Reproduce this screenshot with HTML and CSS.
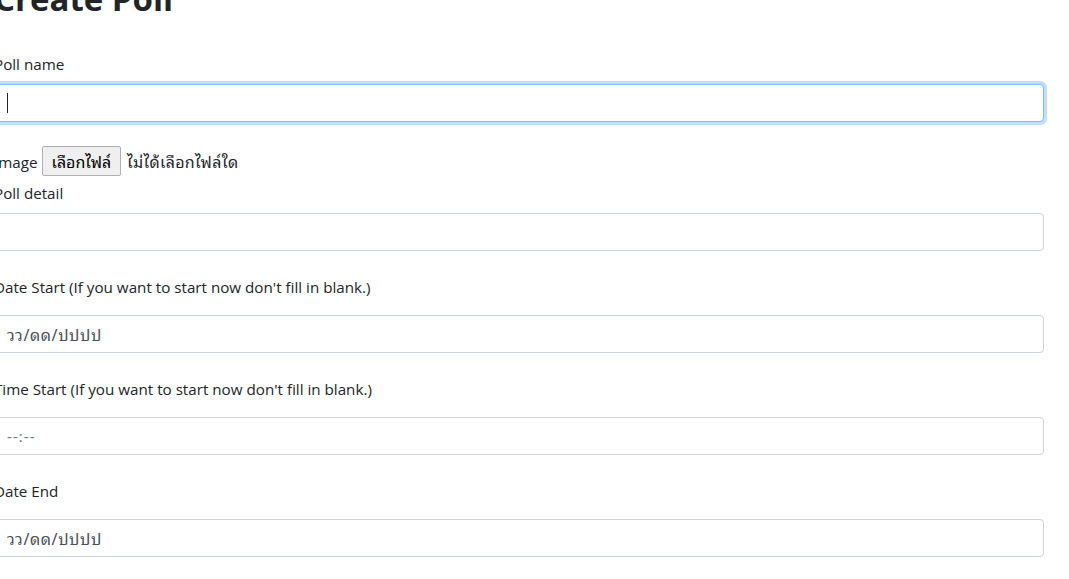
FILE: index.html
```html
<!DOCTYPE html>
<html lang="th">
<head>
<meta charset="utf-8">
<title>Create Poll</title>
<link rel="stylesheet" href="styles.css">
</head>
<body>
<div class="page">
  <h1 class="title">Create Poll</h1>
  <form class="form">
    <div class="group">
      <label class="label" for="pollName">Poll name</label>
      <div class="field-wrap">
        <input id="pollName" class="control control-focus" type="text">
        <span class="caret"></span>
      </div>
    </div>
    <div class="file-row">
      <span class="file-label">Image</span>
      <button type="button" class="file-btn th">เลือกไฟล์</button>
      <span class="file-status th">ไม่ได้เลือกไฟล์ใด</span>
    </div>
    <div class="group">
      <label class="label" for="pollDetail">Poll detail</label>
      <input id="pollDetail" class="control" type="text">
    </div>
    <div class="group">
      <label class="label label-spaced" for="dateStart">Date Start (If you want to start now don't fill in blank.)</label>
      <input id="dateStart" class="control control-date th" type="text" value="วว/ดด/ปปปป">
    </div>
    <div class="group">
      <label class="label label-spaced" for="timeStart">Time Start (If you want to start now don't fill in blank.)</label>
      <input id="timeStart" class="control control-time" type="text" value="--:--">
    </div>
    <div class="group">
      <label class="label label-spaced" for="dateEnd">Date End</label>
      <input id="dateEnd" class="control control-date th" type="text" value="วว/ดด/ปปปป">
    </div>
  </form>
</div>
</body>
</html>
```

FILE: styles.css
```css
html, body {
  margin: 0;
  padding: 0;
  background: #fff;
  overflow: hidden;
}

body {
  font-family: "Open Sans", "Noto Sans", sans-serif;
  font-size: 15.2px;
  color: #212529;
}

.th {
  font-family: "Noto Sans Thai Looped", "Leelawadee UI", "Tahoma", "Loma", "Waree", "Garuda", "Umpush", "Sawasdee", "Noto Sans Thai", "Open Sans", sans-serif;
}

.page {
  margin-left: -6px;
  width: 1050px;
}

.title {
  font-size: 33px;
  font-weight: 700;
  line-height: 40px;
  margin: -21px 0 33px 0;
  color: #212529;
}

.form {
  display: flex;
  flex-direction: column;
}

.group {
  display: flex;
  flex-direction: column;
  margin-bottom: 24px;
}

.label {
  display: block;
  line-height: 24px;
  margin-bottom: 8px;
}

.label-spaced {
  margin-bottom: 16px;
}

.field-wrap {
  position: relative;
}

.control {
  box-sizing: border-box;
  width: 100%;
  height: 38px;
  padding: 6px 12px;
  font-family: inherit;
  font-size: 15.2px;
  color: #495057;
  background: #fff;
  border: 1px solid #ced4da;
  border-radius: 4px;
  outline: none;
}

.control.th {
  font-family: "Noto Sans Thai Looped", "Leelawadee UI", "Tahoma", "Loma", "Waree", "Garuda", "Umpush", "Sawasdee", "Noto Sans Thai", "Open Sans", sans-serif;
  font-size: 16px;
  letter-spacing: 0.6px;
}

.control-focus {
  border-color: #80bdff;
  box-shadow: 0 0 0 3px rgba(0, 123, 255, 0.25);
}

.control-time {
  color: #6c757d;
  letter-spacing: 1px;
}

.caret {
  position: absolute;
  left: 13px;
  top: 9px;
  width: 1px;
  height: 20px;
  background: #212529;
}

.file-row {
  display: flex;
  align-items: baseline;
  height: 35px;
}

.file-label {
  line-height: 24px;
}

.file-btn {
  box-sizing: border-box;
  height: 30px;
  margin: 0 6px 0 4px;
  padding: 0 9px;
  font-size: 16px;
  font-weight: 400;
  color: #000;
  background: #efefef;
  border: 1px solid #b0b0b0;
  border-radius: 2px;
}

.file-status {
  font-size: 16px;
  letter-spacing: 0.3px;
  color: #212529;
}
```
